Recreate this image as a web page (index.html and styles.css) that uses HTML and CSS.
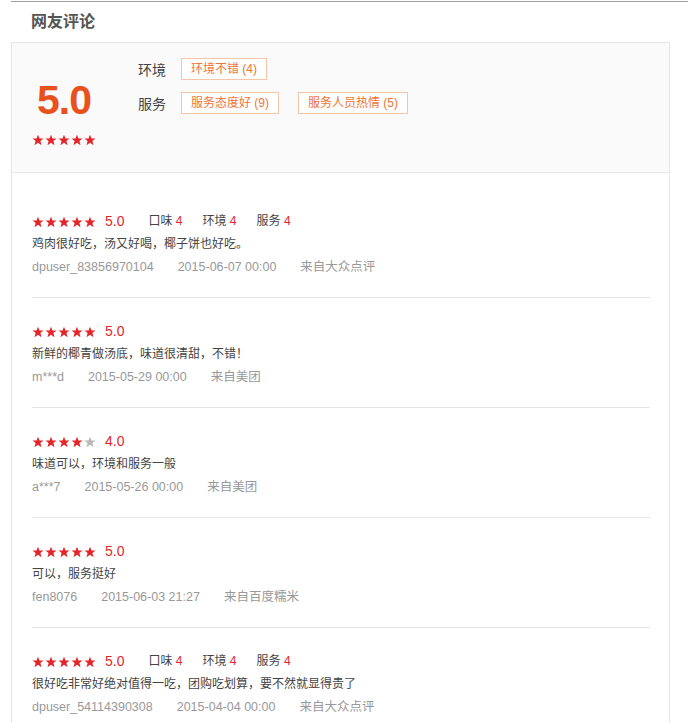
FILE: index.html
```html
<!DOCTYPE html>
<html lang="zh-CN">

<head>
  <meta charset="UTF-8" />
  <meta name="viewport" content="width=device-width, initial-scale=1.0" />
  <title>网友评论</title>
  <link rel="stylesheet" href="styles.css">
</head>

<body>
  <svg width="0" height="0" class="defs">
    <symbol id="star" viewBox="0 0 24 24">
      <polygon points="12,1.5 15,9 23,9.2 16.8,14.2 19,22.3 12,17.6 5,22.3 7.2,14.2 1,9.2 9,9" />
    </symbol>
  </svg>

  <div class="page">
    <div class="topline"></div>
    <h2 class="title">网友评论</h2>

    <div class="card">
      <div class="summary">
        <div class="score-box">
          <div class="score">5.0</div>
          <div class="stars">
            <svg class="on"><use href="#star" /></svg><svg class="on"><use href="#star" /></svg><svg class="on"><use href="#star" /></svg><svg class="on"><use href="#star" /></svg><svg class="on"><use href="#star" /></svg>
          </div>
        </div>
        <div class="tag-rows">
          <div class="tag-row">
            <span class="tag-label">环境</span>
            <span class="tag">环境不错 (4)</span>
          </div>
          <div class="tag-row">
            <span class="tag-label">服务</span>
            <span class="tag">服务态度好 (9)</span>
            <span class="tag">服务人员热情 (5)</span>
          </div>
        </div>
      </div>

      <!-- 评论列表 -->
      <ul class="reviews">
        <li class="review">
          <div class="r-head">
            <span class="stars"><svg class="on"><use href="#star" /></svg><svg class="on"><use href="#star" /></svg><svg class="on"><use href="#star" /></svg><svg class="on"><use href="#star" /></svg><svg class="on"><use href="#star" /></svg></span>
            <span class="r-score">5.0</span>
            <span class="r-item">口味 <em>4</em></span>
            <span class="r-item">环境 <em>4</em></span>
            <span class="r-item">服务 <em>4</em></span>
          </div>
          <p class="r-text">鸡肉很好吃，汤又好喝，椰子饼也好吃。</p>
          <div class="r-meta"><span>dpuser_83856970104</span><span>2015-06-07 00:00</span><span>来自大众点评</span></div>
        </li>
        <li class="review">
          <div class="r-head">
            <span class="stars"><svg class="on"><use href="#star" /></svg><svg class="on"><use href="#star" /></svg><svg class="on"><use href="#star" /></svg><svg class="on"><use href="#star" /></svg><svg class="on"><use href="#star" /></svg></span>
            <span class="r-score">5.0</span>
          </div>
          <p class="r-text">新鲜的椰青做汤底，味道很清甜，不错！</p>
          <div class="r-meta"><span>m***d</span><span>2015-05-29 00:00</span><span>来自美团</span></div>
        </li>
        <li class="review">
          <div class="r-head">
            <span class="stars"><svg class="on"><use href="#star" /></svg><svg class="on"><use href="#star" /></svg><svg class="on"><use href="#star" /></svg><svg class="on"><use href="#star" /></svg><svg class="off"><use href="#star" /></svg></span>
            <span class="r-score">4.0</span>
          </div>
          <p class="r-text">味道可以，环境和服务一般</p>
          <div class="r-meta"><span>a***7</span><span>2015-05-26 00:00</span><span>来自美团</span></div>
        </li>
        <li class="review">
          <div class="r-head">
            <span class="stars"><svg class="on"><use href="#star" /></svg><svg class="on"><use href="#star" /></svg><svg class="on"><use href="#star" /></svg><svg class="on"><use href="#star" /></svg><svg class="on"><use href="#star" /></svg></span>
            <span class="r-score">5.0</span>
          </div>
          <p class="r-text">可以，服务挺好</p>
          <div class="r-meta"><span>fen8076</span><span>2015-06-03 21:27</span><span>来自百度糯米</span></div>
        </li>
        <li class="review">
          <div class="r-head">
            <span class="stars"><svg class="on"><use href="#star" /></svg><svg class="on"><use href="#star" /></svg><svg class="on"><use href="#star" /></svg><svg class="on"><use href="#star" /></svg><svg class="on"><use href="#star" /></svg></span>
            <span class="r-score">5.0</span>
            <span class="r-item">口味 <em>4</em></span>
            <span class="r-item">环境 <em>4</em></span>
            <span class="r-item">服务 <em>4</em></span>
          </div>
          <p class="r-text">很好吃非常好绝对值得一吃，团购吃划算，要不然就显得贵了</p>
          <div class="r-meta"><span>dpuser_54114390308</span><span>2015-04-04 00:00</span><span>来自大众点评</span></div>
        </li>
      </ul>
    </div>
  </div>
</body>

</html>
```

FILE: styles.css
```css
body {
  margin: 0;
  font-family: "Liberation Sans", "Noto Sans CJK SC", sans-serif;
  color: #333;
  background: #fff;
  overflow: hidden;
}

.defs {
  position: absolute;
}

.page {
  padding-left: 11px;
}

.topline {
  margin-top: 1px;
  border-top: 1px solid #a0a0a0;
}

.title {
  margin: 0;
  height: 40px;
  line-height: 40px;
  padding-left: 20px;
  font-size: 16px;
  font-weight: bold;
  color: #555;
}

.card {
  width: 657px;
  min-height: 700px;
  border: 1px solid #e6e6e6;
  border-bottom: none;
}

.summary {
  display: flex;
  height: 114px;
  padding: 15px 20px 0;
  background: #fafafa;
  border-bottom: 1px solid #e8e8e8;
}

.score-box {
  width: 64px;
  margin-right: 42px;
  text-align: center;
}

.score {
  margin-top: 17px;
  height: 50px;
  line-height: 50px;
  font-size: 41px;
  font-weight: bold;
  letter-spacing: -1px;
  color: #e8501c;
}

.score-box .stars {
  margin-top: 9px;
}

.stars {
  display: inline-flex;
  gap: 1px;
}

.stars svg {
  width: 12px;
  height: 12px;
}

.stars .on {
  fill: #e4262b;
}

.stars .off {
  fill: #b8b8b8;
}

.tag-rows {
  display: flex;
  flex-direction: column;
  gap: 13px;
}

.tag-row {
  display: flex;
  align-items: center;
  height: 21px;
}

.tag-label {
  width: 43px;
  font-size: 14px;
  color: #444;
}

.tag {
  height: 20px;
  line-height: 20px;
  padding: 0 9px;
  margin-right: 19px;
  font-size: 12px;
  color: #f07433;
  background: #fff;
  border: 1px solid #f6c4a6;
}

.reviews {
  list-style: none;
  margin: 0;
  padding: 15px 19px 0 20px;
}

.review {
  padding: 22px 0 18px;
  border-bottom: 1px solid #e5e5e5;
}

.r-head,
.r-text,
.r-meta {
  height: 23px;
  line-height: 23px;
  margin: 0;
  font-size: 12px;
}

.r-head {
  display: flex;
  align-items: center;
}

.r-score {
  margin: 0 24px 0 9px;
  font-size: 14px;
  color: #e4262b;
}

.r-item {
  margin-right: 20px;
  color: #444;
}

.r-item em {
  font-style: normal;
  color: #e4262b;
}

.r-text {
  color: #444;
}

.r-meta {
  font-size: 12.5px;
  color: #999;
}

.r-meta span {
  margin-right: 24px;
}
```
